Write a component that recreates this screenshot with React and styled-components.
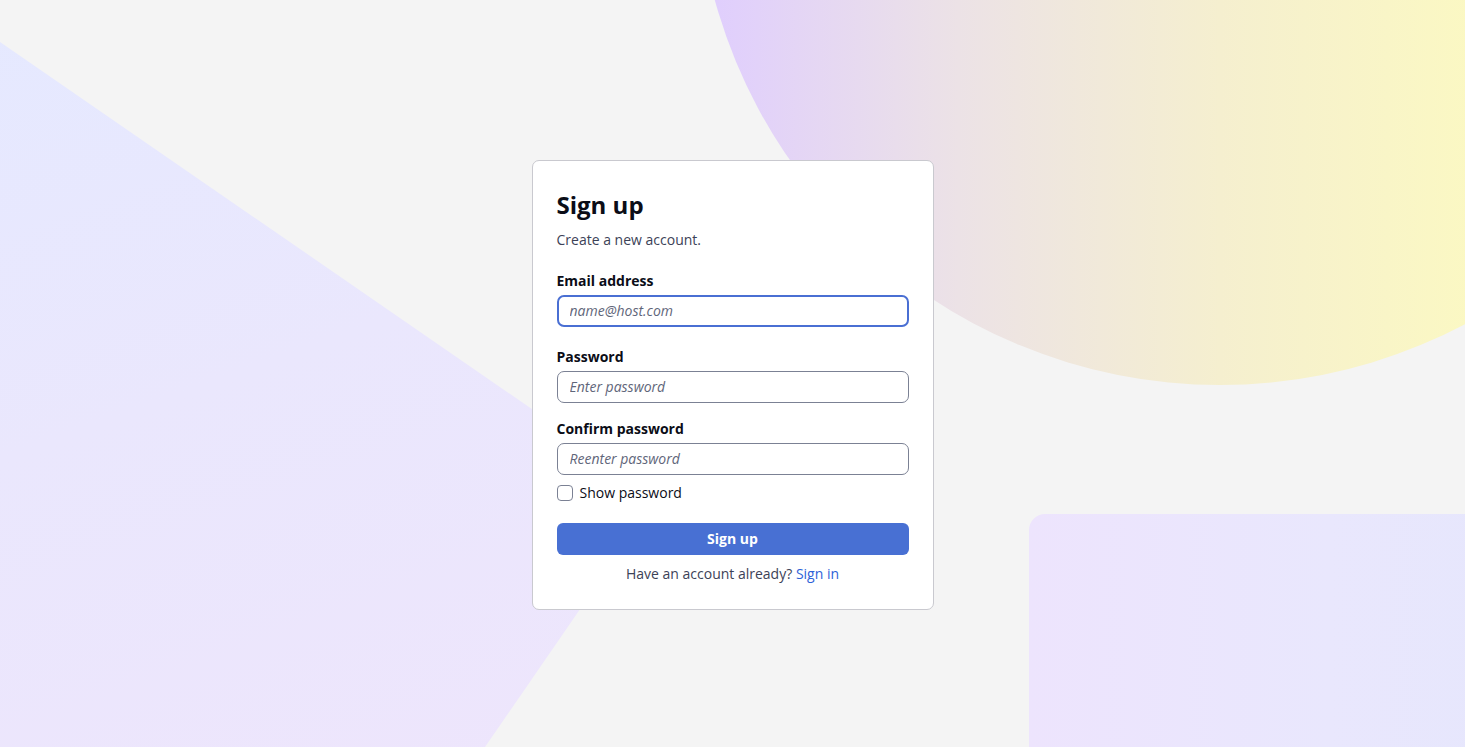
import React from 'react';
import styled, { createGlobalStyle } from 'styled-components';

const GlobalStyle = createGlobalStyle`
    html, body {
        margin: 0;
        padding: 0;
        height: 100%;
    }
    body {
        background: #f4f4f4;
        font-family: "Open Sans", "Liberation Sans", sans-serif;
        color: #0b0d17;
    }
    #root {
        height: 100%;
    }
`;

const Page = styled.div`
    position: relative;
    box-sizing: border-box;
    height: 100vh;
    padding-top: 22px;
    overflow: hidden;
    display: flex;
    align-items: center;
    justify-content: center;
`;

// decorative shapes behind the card
const Wedge = styled.div`
    position: absolute;
    left: 0;
    top: 0;
    width: 760px;
    height: 747px;
    background: linear-gradient(160deg, #e5e9ff 0%, #eae7fd 45%, #eee5fc 100%);
    clip-path: polygon(0 42px, 658px 496px, 485px 747px, 0 747px);
`;

const Circle = styled.div`
    position: absolute;
    left: 696px;
    top: -663px;
    width: 1048px;
    height: 1048px;
    border-radius: 50%;
    background: linear-gradient(90deg, #dfcdff 0%, #ece2e6 25%, #f5efcf 50%, #fbf8c3 74%, #fcfabf 100%);
`;

const Slab = styled.div`
    position: absolute;
    left: 1029px;
    top: 514px;
    width: 600px;
    height: 400px;
    border-radius: 16px;
    background: linear-gradient(90deg, #ede4fd 0%, #e9e7fd 50%, #e4e6fc 100%);
`;

const Card = styled.form`
    position: relative;
    z-index: 1;
    box-sizing: border-box;
    width: 402px;
    background: #fff;
    border: 1px solid #c9c9cf;
    border-radius: 7px;
    padding: 28px 24px 25px;
    display: flex;
    flex-direction: column;
`;

const Title = styled.h1`
    margin: 0;
    font-size: 24px;
    line-height: 32px;
    font-weight: 700;
    color: #0b0d17;
`;

const Subtitle = styled.p`
    margin: 9px 0 21px;
    font-size: 14px;
    line-height: 20px;
    color: #3c4257;
`;

const Field = styled.div`
    display: flex;
    flex-direction: column;
    gap: 4px;
    margin-bottom: ${p => p.$gap || 16}px;
`;

const Label = styled.label`
    font-size: 14px;
    line-height: 20px;
    font-weight: 700;
    color: #0b0d17;
`;

const Input = styled.input`
    box-sizing: border-box;
    height: 32px;
    width: 100%;
    padding: 0 12px;
    border: ${p => (p.$focused ? '2px solid #4a6fd3' : '1px solid #7b8194')};
    border-radius: 7px;
    font-family: "Open Sans", "Liberation Sans", sans-serif;
    font-size: 14px;
    color: #0b0d17;
    background: #fff;
    outline: none;
    padding-left: ${p => (p.$focused ? 11 : 12)}px;

    &::placeholder {
        font-style: italic;
        color: #5f667a;
    }
`;

const CheckRow = styled.label`
    display: flex;
    align-items: center;
    gap: 7px;
    margin: -8px 0 20px;
    font-size: 14px;
    line-height: 20px;
    color: #0b0d17;
`;

const Box = styled.span`
    box-sizing: border-box;
    width: 16px;
    height: 16px;
    border: 1px solid #7b8194;
    border-radius: 4px;
    background: #fff;
`;

const Button = styled.button`
    height: 32px;
    border: none;
    border-radius: 6px;
    background: #4870d3;
    color: #fff;
    font-family: "Open Sans", "Liberation Sans", sans-serif;
    font-size: 14px;
    font-weight: 700;
    cursor: pointer;
`;

const Footer = styled.p`
    margin: 9px 0 0;
    text-align: center;
    font-size: 14px;
    line-height: 20px;
    color: #3c4257;
`;

const Link = styled.a`
    color: #2d62d8;
    text-decoration: none;
`;

export default function App() {
    return (
        <Page>
            <GlobalStyle />
            <Wedge />
            <Circle />
            <Slab />
            <Card onSubmit={e => e.preventDefault()}>
                <Title>Sign up</Title>
                <Subtitle>Create a new account.</Subtitle>
                <Field $gap={20}>
                    <Label htmlFor="email">Email address</Label>
                    <Input id="email" type="email" placeholder="name@host.com" $focused />
                </Field>
                <Field>
                    <Label htmlFor="password">Password</Label>
                    <Input id="password" type="password" placeholder="Enter password" />
                </Field>
                <Field>
                    <Label htmlFor="confirm">Confirm password</Label>
                    <Input id="confirm" type="password" placeholder="Reenter password" />
                </Field>
                <CheckRow>
                    <Box />
                    Show password
                </CheckRow>
                <Button type="submit">Sign up</Button>
                <Footer>
                    Have an account already? <Link href="#">Sign in</Link>
                </Footer>
            </Card>
        </Page>
    );
}
